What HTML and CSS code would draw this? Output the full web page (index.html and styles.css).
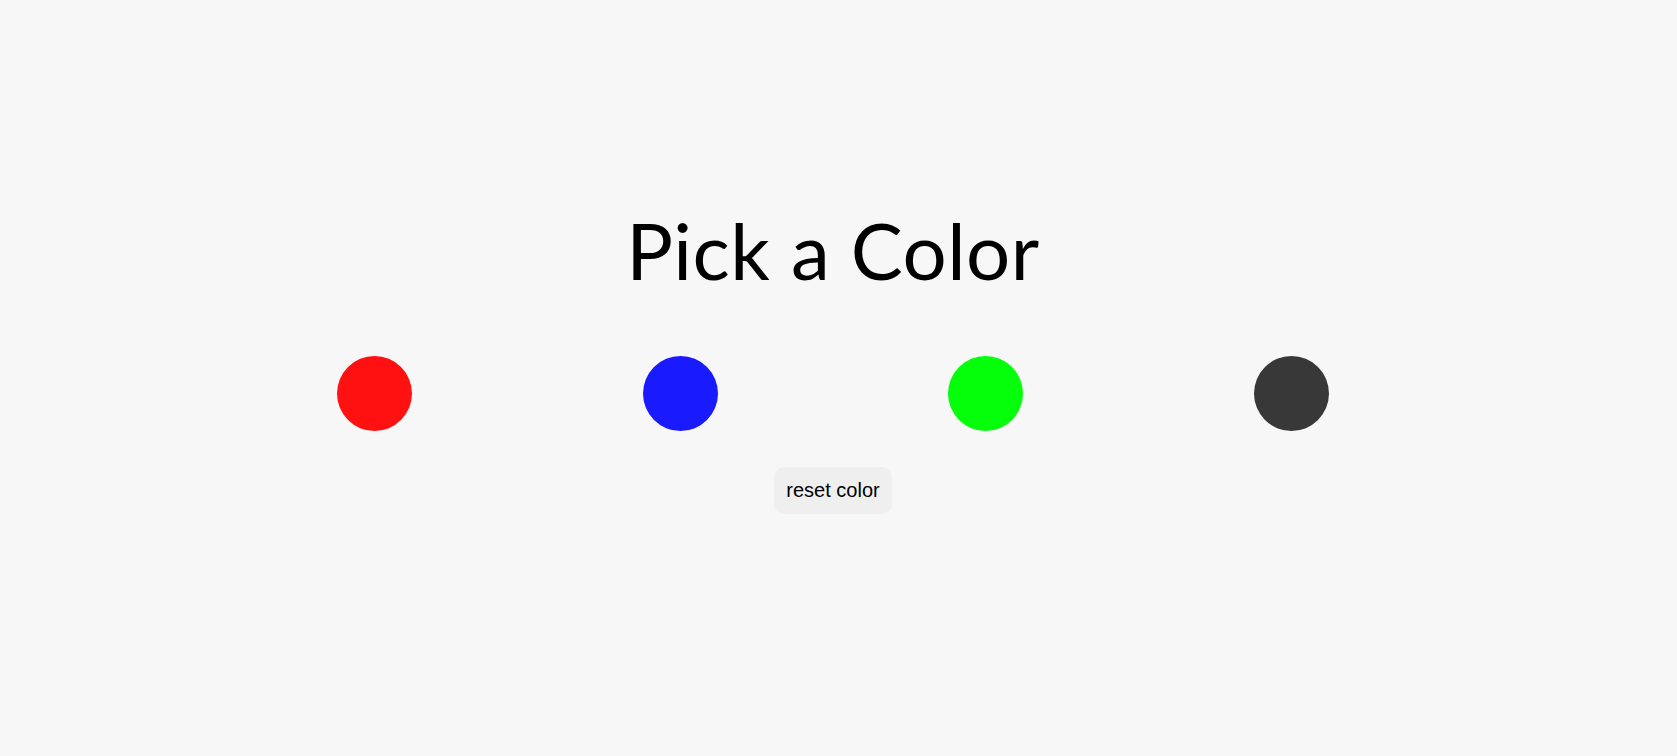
FILE: index.html
```html
<!DOCTYPE html>
<html>
<head>
<meta charset="utf-8">
<title>Pick a Color</title>
<link rel="stylesheet" href="styles.css">
</head>
<body>
<main class="page">
  <h1 class="title">Pick a Color</h1>
  <div class="swatches">
    <div class="slot"><div class="dot dot-red"></div></div>
    <div class="slot"><div class="dot dot-blue"></div></div>
    <div class="slot"><div class="dot dot-green"></div></div>
    <div class="slot"><div class="dot dot-dark"></div></div>
  </div>
  <button class="reset">reset color</button>
</main>
</body>
</html>
```

FILE: styles.css
```css
html, body {
  margin: 0;
  padding: 0;
  background: #f7f7f7;
}

.page {
  display: flex;
  flex-direction: column;
  align-items: center;
  padding-top: 211px;
  width: 1666px;
}

.title {
  margin: 0;
  font-family: "Lato", "Liberation Sans", sans-serif;
  font-weight: 400;
  font-size: 78px;
  line-height: 78px;
  letter-spacing: 0.5px;
  color: #000;
}

.swatches {
  display: grid;
  grid-template-columns: repeat(4, 1fr);
  width: 1223px;
  margin-top: 67px;
}

.slot {
  display: flex;
  justify-content: center;
}

.dot {
  width: 75px;
  height: 75px;
  border-radius: 50%;
}

.dot-red { background: #ff1111; }
.dot-blue { background: #1a1aff; }
.dot-green { background: #05ff0a; }
.dot-dark { background: #383838; }

.reset {
  margin-top: 36px;
  height: 47px;
  padding: 0 12px;
  border: none;
  border-radius: 10px;
  background: #efefef;
  font-family: "Liberation Sans", Arial, sans-serif;
  font-size: 20px;
  color: #000;
}
```
